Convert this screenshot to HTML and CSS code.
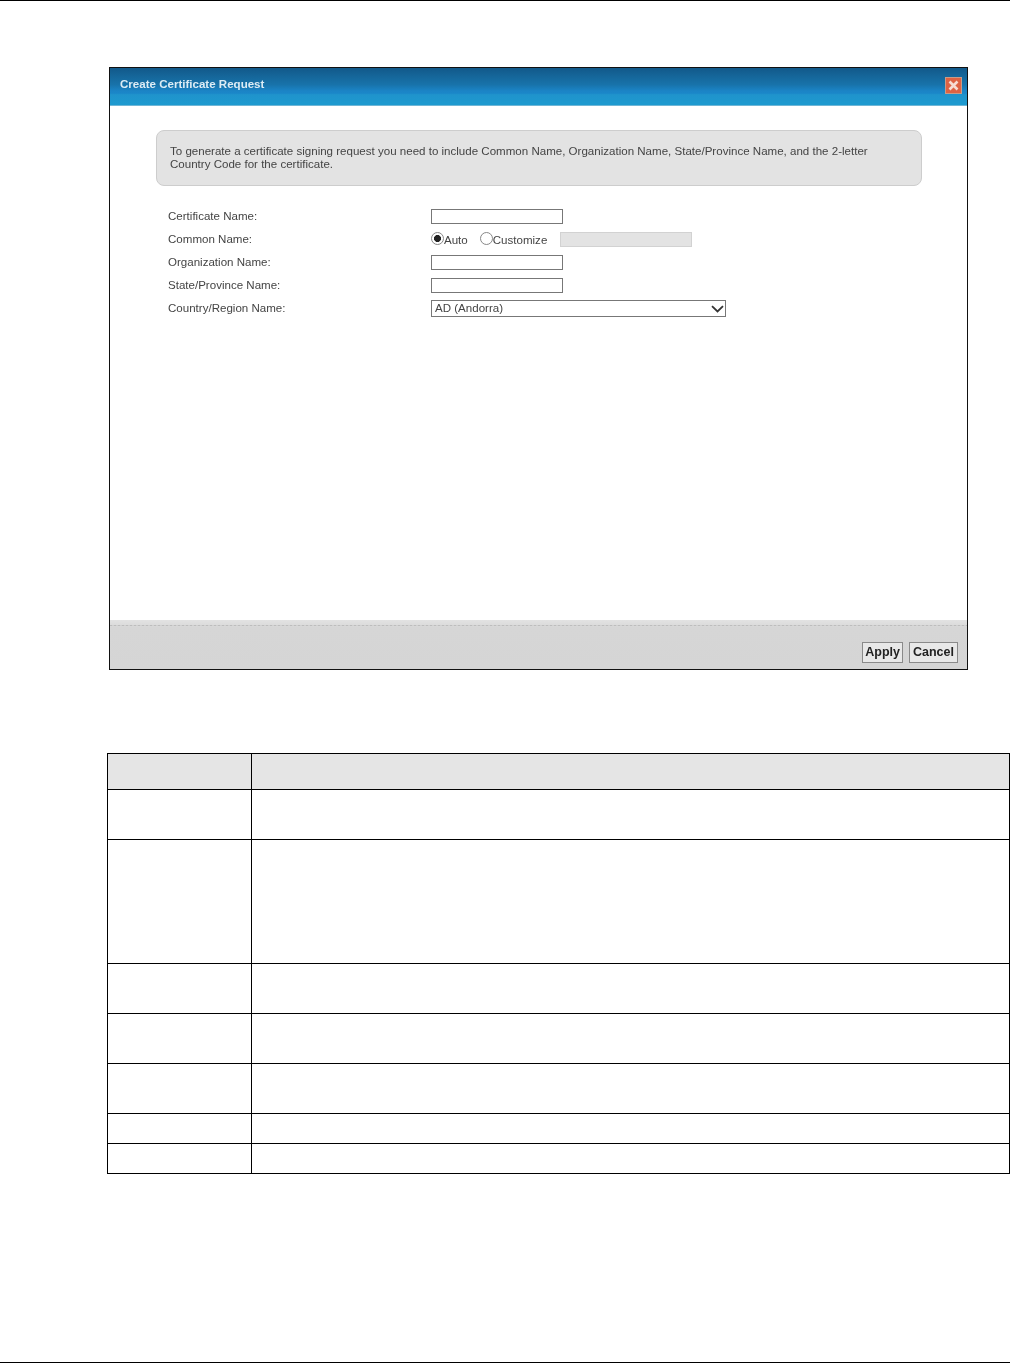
FILE: index.html
```html
<!DOCTYPE html>
<html lang="en">
<head>
<meta charset="utf-8">
<title>Create Certificate Request</title>
<link rel="stylesheet" href="styles.css">
</head>
<body>
<div class="page">
  <section class="dialog">
    <header class="titlebar">
      <h1 class="title">Create Certificate Request</h1>
      <span class="close">
        <svg viewBox="0 0 17 17" width="17" height="17"><rect x="0.5" y="0.5" width="16" height="16" fill="#de6243" stroke="#c99a86"/><path d="M4.5 4.5L12.5 12.5M12.5 4.5L4.5 12.5" stroke="#f6dcd2" stroke-width="2.6"/></svg>
      </span>
    </header>
    <div class="body">
      <p class="note">To generate a certificate signing request you need to include Common Name, Organization Name, State/Province Name, and the 2-letter Country Code for the certificate.</p>
      <div class="form">
        <div class="row"><span class="label">Certificate Name:</span><span class="field"></span></div>
        <div class="row"><span class="label">Common Name:</span>
          <div class="choices">
            <span class="radio radio-on"></span><span class="opt">Auto</span>
            <span class="radio"></span><span class="opt opt-last">Customize</span>
            <span class="field field-off"></span>
          </div>
        </div>
        <div class="row"><span class="label">Organization Name:</span><span class="field"></span></div>
        <div class="row"><span class="label">State/Province Name:</span><span class="field"></span></div>
        <div class="row"><span class="label">Country/Region Name:</span>
          <div class="select"><span class="select-text">AD (Andorra)</span>
            <svg viewBox="0 0 13 8" width="13" height="8"><path d="M1 1.2L6.5 6.5L12 1.2" fill="none" stroke="#333" stroke-width="1.8"/></svg>
          </div>
        </div>
      </div>
    </div>
    <footer class="footer">
      <span class="btn btn-apply">Apply</span>
      <span class="btn">Cancel</span>
    </footer>
  </section>
  <div class="grid">
    <div class="cell head"></div><div class="cell head"></div>
    <div class="cell h50"></div><div class="cell h50"></div>
    <div class="cell h124"></div><div class="cell h124"></div>
    <div class="cell h50"></div><div class="cell h50"></div>
    <div class="cell h50"></div><div class="cell h50"></div>
    <div class="cell h50"></div><div class="cell h50"></div>
    <div class="cell h30"></div><div class="cell h30"></div>
    <div class="cell h30"></div><div class="cell h30"></div>
  </div>
</div>
</body>
</html>
```
FILE: styles.css
```css
* { box-sizing: border-box; }
html, body { margin: 0; padding: 0; background: #fff; }
body { font-family: "Liberation Sans", Arial, sans-serif; }
.page {
  width: 1010px;
  height: 1363px;
  border-top: 1px solid #000;
  border-bottom: 1px solid #000;
  padding: 66px 0 0 0;
  overflow: hidden;
}
.dialog {
  width: 859px;
  height: 603px;
  margin-left: 109px;
  border: 1px solid #111;
  display: flex;
  flex-direction: column;
  color: #444;
  font-size: 11.55px;
  background: #fff;
  filter: blur(0.35px);
}
.titlebar {
  flex: 0 0 38px;
  display: flex;
  align-items: center;
  justify-content: space-between;
  padding: 0 5px 6px 10px;
  background: linear-gradient(#12598a 0, #1873aa 45%, #1b84c6 62%, #1a86c8 68%, #1f93cc 72%, #1d9acf 100%);
  border-bottom: 1px solid #6fb6d6;
}
.title { margin: 0; font-size: 11.55px; font-weight: 700; color: #dcecf5; }
.close { display: block; width: 17px; height: 17px; margin-top: 3px; }
.close svg { display: block; }
.body { flex: 1; padding: 24px 45px 0 46px; }
.note {
  margin: 0;
  height: 56px;
  padding: 14px 13px 0 13px;
  line-height: 13px;
  background: #e3e3e3;
  border: 1px solid #cdcdcd;
  border-radius: 8px;
}
.form { margin: 19px 0 0 12px; }
.row { display: flex; align-items: center; height: 23px; }
.label { flex: 0 0 263px; padding-bottom: 2px; }
.field {
  display: block;
  width: 132px;
  height: 15px;
  background: #fff;
  border: 1px solid #777;
}
.choices { display: flex; align-items: center; }
.radio {
  display: block;
  width: 13px;
  height: 13px;
  border: 1px solid #888;
  border-radius: 50%;
  background: #fff;
  margin-top: -2px;
}
.radio-on { background: radial-gradient(circle, #222 0 3.2px, #fff 3.8px); }
.opt { margin-right: 12px; padding-top: 1px; }
.opt-last { margin-right: 13px; }
.field-off { background: #e3e3e3; border-color: #d2d2d2; }
.select {
  width: 295px;
  height: 17px;
  display: flex;
  align-items: center;
  justify-content: space-between;
  padding: 0 1px 0 3px;
  border: 1px solid #777;
  background: #fff;
}
.select-text { padding-bottom: 2px; }
.footer {
  flex: 0 0 49px;
  display: flex;
  justify-content: flex-end;
  align-items: flex-start;
  gap: 6px;
  padding: 22px 9px 0 0;
  background:
    repeating-linear-gradient(90deg, #bdbdbd 0 2px, #d0d0d0 2px 4px) 0 5px / 100% 1px no-repeat,
    linear-gradient(#e2e2e2 0, #dcdcdc 5px, #d6d6d6 7px, #d5d5d5 100%);
}
.btn {
  display: block;
  height: 21px;
  line-height: 18px;
  padding: 0 3px;
  font-size: 12.5px;
  font-weight: 700;
  color: #222;
  background: #e8e8e8;
  border: 1px solid #8a8a8a;
}
.btn-apply { padding: 0 2px; }
.grid {
  width: 903px;
  margin: 83px 0 0 107px;
  display: grid;
  grid-template-columns: 144px 758px;
  border-top: 1px solid #000;
  border-left: 1px solid #000;
}
.cell { border-right: 1px solid #000; border-bottom: 1px solid #000; }
.head { height: 36px; background: #e5e5e5; }
.h50 { height: 50px; }
.h124 { height: 124px; }
.h30 { height: 30px; }
```
